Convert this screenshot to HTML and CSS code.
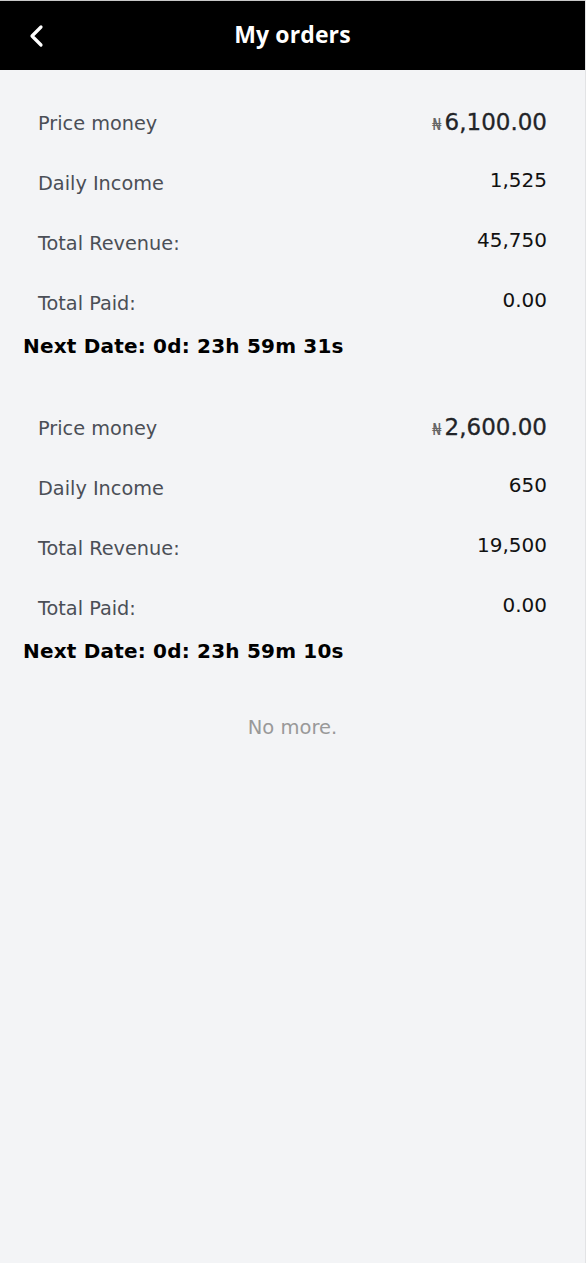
FILE: index.html
```html
<!DOCTYPE html>
<html>
<head>
<meta charset="utf-8">
<link rel="stylesheet" href="styles.css">
</head>
<body>
<header class="topbar">
  <span class="back">
    <svg width="18" height="24" viewBox="0 0 18 24"><path d="M13 3 L4 12 L13 21" fill="none" stroke="#fff" stroke-width="3.2" stroke-linecap="round" stroke-linejoin="round"/></svg>
  </span>
  <h1 class="title">My orders</h1>
</header>
<main>
  <section class="order">
    <div class="row"><span class="label">Price money</span><span class="price"><span class="cur">₦</span>6,100.00</span></div>
    <div class="row"><span class="label">Daily Income</span><span class="value">1,525</span></div>
    <div class="row"><span class="label">Total Revenue:</span><span class="value">45,750</span></div>
    <div class="row"><span class="label">Total Paid:</span><span class="value">0.00</span></div>
    <div class="next">Next Date: 0d: 23h 59m 31s</div>
  </section>
  <section class="order">
    <div class="row"><span class="label">Price money</span><span class="price"><span class="cur">₦</span>2,600.00</span></div>
    <div class="row"><span class="label">Daily Income</span><span class="value">650</span></div>
    <div class="row"><span class="label">Total Revenue:</span><span class="value">19,500</span></div>
    <div class="row"><span class="label">Total Paid:</span><span class="value">0.00</span></div>
    <div class="next">Next Date: 0d: 23h 59m 10s</div>
  </section>
  <p class="nomore">No more.</p>
</main>
</body>
</html>
```
FILE: styles.css
```css
html, body {
  margin: 0;
  padding: 0;
}
body {
  background: #f3f4f6;
  font-family: "DejaVu Sans", "Noto Sans", sans-serif;
  min-height: 1263px;
  border-right: 1px solid #e2e3e5;
  box-sizing: border-box;
}
.topbar {
  height: 69px;
  background: #000;
  border-top: 1px solid #c8c8c8;
  display: flex;
  align-items: center;
  justify-content: center;
  position: relative;
}
.back {
  position: absolute;
  left: 28px;
  top: 23px;
  display: flex;
}
.title {
  margin: 0 0 3px;
  color: #fff;
  font-family: "Open Sans", sans-serif;
  font-weight: 700;
  font-size: 23px;
  letter-spacing: 0.1px;
}
.order {
  padding: 23px 38px 16px 38px;
}
.row {
  height: 60px;
  display: flex;
  justify-content: space-between;
  align-items: center;
}
.label {
  font-size: 19.3px;
  color: #4b4f56;
  padding-top: 1px;
}
.value {
  font-size: 20px;
  color: #111;
  margin-top: -6px;
}
.price {
  font-size: 23px;
  color: #222428;
  margin-top: -3px;
  -webkit-text-stroke: 0.3px #222428;
}
.cur {
  font-size: 15px;
  color: #666;
  margin-right: 3px;
  -webkit-text-stroke: 0;
}
.next {
  margin-left: -15px;
  height: 26px;
  line-height: 26px;
  font-size: 20px;
  letter-spacing: 0.2px;
  font-weight: 700;
  color: #000;
}
.nomore {
  margin: 36px 0 0;
  text-align: center;
  color: #999;
  font-size: 19.5px;
}
```
